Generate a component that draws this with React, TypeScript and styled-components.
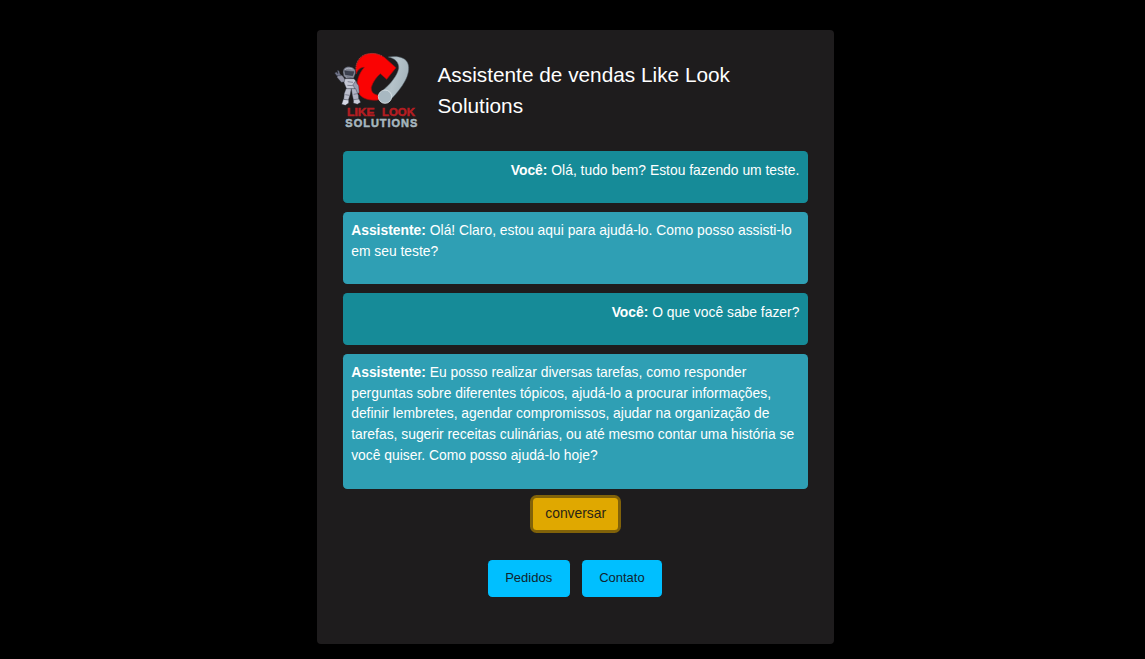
import React from "react";
import styled, { createGlobalStyle } from "styled-components";

const GlobalStyle = createGlobalStyle`
  * { box-sizing: border-box; }
  body {
    margin: 0;
    background: #000;
    color: #fff;
    font-family: "Liberation Sans", Arial, sans-serif;
    font-size: 13.86px;
    line-height: 20.75px;
  }
`;

const Page = styled.div`
  height: 659px;
  overflow: hidden;
  padding-top: 30px;
  padding-left: 317px;
`;

const Card = styled.main`
  width: 517.4px;
  height: 613.5px;
  border-radius: 4px;
  background: #1e1c1d;
  padding: 15px 26px 0;
`;

const Header = styled.header`
  display: flex;
  height: 106.2px;
  margin-left: -18px;
`;

const Logo = styled.svg`
  flex: none;
  width: 105px;
  height: 90px;
`;

const Title = styled.h1`
  width: 330px;
  margin: 14px 0 0 7.5px;
  font-size: 20.8px;
  font-weight: 400;
  line-height: 31.2px;
`;

const Messages = styled.section`
  display: flex;
  flex-direction: column;
  gap: 8.67px;
`;

const Message = styled.div<{ $own?: boolean }>`
  padding: ${(p) => (p.$own ? "8.7px 9px 22.5px" : "8.1px 9px 23.1px 8.2px")};
  border-radius: 4.3px;
  background: ${(p) => (p.$own ? "#168b98" : "#2f9fb4")};
  text-align: ${(p) => (p.$own ? "right" : "left")};
`;

const TalkRow = styled.div`
  display: flex;
  justify-content: center;
  margin-top: 9px;
`;

const TalkButton = styled.button`
  width: 85px;
  height: 32.5px;
  padding: 0 0 2px;
  border: 0;
  border-radius: 3.5px;
  background: #e0a800;
  box-shadow: 0 0 0 3px #816209;
  color: #292416;
  font: 13.86px "Liberation Sans", Arial, sans-serif;
`;

const Links = styled.nav`
  display: flex;
  justify-content: center;
  gap: 12px;
  margin-top: 29.5px;
  padding-right: 1.5px;
`;

const LinkButton = styled.button<{ $width: number }>`
  width: ${(p) => p.$width}px;
  height: 37.5px;
  padding: 0 0 2px;
  border: 0;
  border-radius: 4.3px;
  background: #00bfff;
  color: #10242e;
  font: 13px "Liberation Sans", Arial, sans-serif;
`;

const LogoWord = styled.text`
  font-family: "Liberation Sans", Arial, sans-serif;
  font-weight: 700;
  stroke-width: 1.5;
`;

function BrandLogo() {
  return (
    <Logo viewBox="0 0 315 270" role="img" aria-label="Like Look Solutions">
      <defs>
        <linearGradient id="tube" x1="0" y1="0" x2="1" y2="0.4">
          <stop offset="0" stopColor="#9dabb3" />
          <stop offset="0.55" stopColor="#b5c3ca" />
          <stop offset="1" stopColor="#a6b5bd" />
        </linearGradient>
      </defs>
      <path
        d="M190 36 C215 31 242 37 248 54 C255 70 249 92 240 108 C230 127 214 146 201 160 L174 136 C198 115 217 92 221 70 C222 53 212 41 190 36Z"
        fill="url(#tube)"
        stroke="#53616a"
        strokeWidth="1.5"
      />
      <path
        d="M94 87 C88 57 103 32 127 27 C147 22 164 28 178 37 L213 68 L185 103 L166 86 C154 96 143 112 139 127 C138 141 145 148 160 151 L163 164 C138 169 112 162 103 147 C94 133 95 116 99 101 C103 88 109 77 118 67 C106 67 98 74 94 87Z"
        fill="#fa0303"
        stroke="#a50a0c"
        strokeWidth="2"
      />
      <path d="M93 76 C91 49 106 30 128 27 C145 23 159 27 171 33" fill="none" stroke="#e78178" strokeWidth="1.5" strokeDasharray="3 3" />
      <circle cx="180" cy="155" r="20" fill="#a8b8c1" stroke="#dae2e7" strokeWidth="2.5" />
      <g stroke="#292d3a" strokeWidth="1.2" strokeLinejoin="round">
        <path d="M54 94 L40 84 L36 97 L49 112 L64 110Z" fill="#9495a6" />
        <path d="M35 92 L29 84 L34 81 L39 86 L37 76 L42 77 L47 92Z" fill="#72758a" />
        <path d="M54 82 C54 69 64 64 76 66 C88 68 93 75 91 86 L86 99 L65 101 L56 93Z" fill="#858997" />
        <path d="M59 77 L87 80 L83 92 L61 89Z" fill="#3d4150" />
        <path d="M60 101 L87 101 L95 111 L90 132 L65 132 L57 113Z" fill="#c5c7d4" />
        <path d="M91 109 L101 122 L103 143 L95 146 L89 131 L84 119Z" fill="#9a9db0" />
        <path d="M63 131 L79 131 L76 147 L70 166 L56 164 L58 145Z" fill="#bbbecc" />
        <path d="M79 131 L92 131 L100 151 L102 168 L86 168 L82 151Z" fill="#b0b3c4" />
        <path d="M55 163 L71 165 L71 174 L61 181 L50 178Z" fill="#d6d9e5" />
        <path d="M86 164 L102 162 L107 172 L97 178 L85 174Z" fill="#c8ccd9" />
      </g>
      <path d="M66 96 L80 98 M68 110 L84 112 M67 121 L84 122 M61 149 L73 151 M86 148 L97 146" stroke="#5a5e70" strokeWidth="2" />
      <path d="M60 74 C65 68 75 69 82 72 M67 106 L82 107" fill="none" stroke="#c3c6d2" strokeWidth="2" />
      <LogoWord x="66" y="213" fontSize="31" textLength="83" lengthAdjust="spacingAndGlyphs" fill="#b51d22" stroke="#b51d22">
        LIKE
      </LogoWord>
      <LogoWord x="171" y="213" fontSize="31" textLength="99" lengthAdjust="spacingAndGlyphs" fill="#b51d22" stroke="#b51d22">
        LOOK
      </LogoWord>
      <LogoWord x="61" y="246" fontSize="33" textLength="216" lengthAdjust="spacing" fill="#a7b7bf" stroke="#a7b7bf">
        SOLUTIONS
      </LogoWord>
    </Logo>
  );
}

const conversation = [
  { own: true, text: "Olá, tudo bem? Estou fazendo um teste." },
  { own: false, text: "Olá! Claro, estou aqui para ajudá-lo. Como posso assisti-lo em seu teste?" },
  { own: true, text: "O que você sabe fazer?" },
  {
    own: false,
    text: "Eu posso realizar diversas tarefas, como responder perguntas sobre diferentes tópicos, ajudá-lo a procurar informações, definir lembretes, agendar compromissos, ajudar na organização de tarefas, sugerir receitas culinárias, ou até mesmo contar uma história se você quiser. Como posso ajudá-lo hoje?",
  },
];

export default function App() {
  return (
    <Page>
      <GlobalStyle />
      <Card>
        <Header>
          <BrandLogo />
          <Title>Assistente de vendas Like Look Solutions</Title>
        </Header>
        <Messages>
          {conversation.map((m) => (
            <Message key={m.text} $own={m.own}>
              <strong>{m.own ? "Você:" : "Assistente:"}</strong> {m.text}
            </Message>
          ))}
        </Messages>
        <TalkRow>
          <TalkButton>conversar</TalkButton>
        </TalkRow>
        <Links>
          <LinkButton $width={82}>Pedidos</LinkButton>
          <LinkButton $width={80.5}>Contato</LinkButton>
        </Links>
      </Card>
    </Page>
  );
}
